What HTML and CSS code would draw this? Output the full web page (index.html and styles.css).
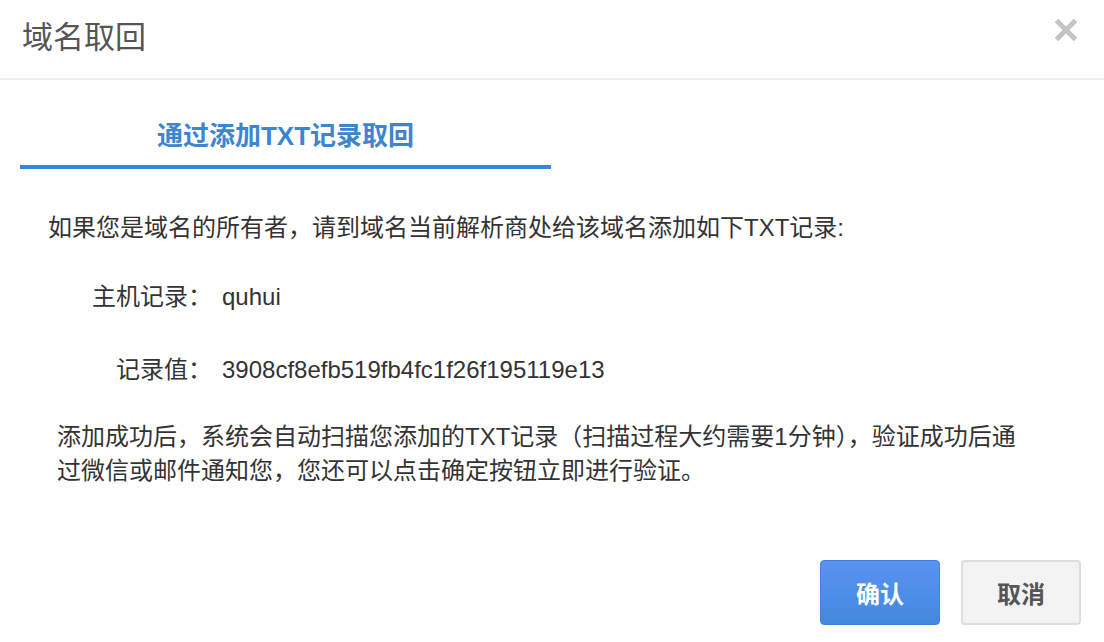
FILE: index.html
```html
<!DOCTYPE html>
<html lang="zh-CN">
<head>
<meta charset="utf-8">
<title>域名取回</title>
<link rel="stylesheet" href="styles.css">
</head>
<body>
<div class="dialog">
  <div class="header">
    <div class="title">域名取回</div>
    <button class="close" aria-label="关闭">
      <svg width="24" height="24" viewBox="0 0 24 24"><path d="M2.5 2.5 L21.5 21.5 M21.5 2.5 L2.5 21.5" stroke="#c4c4c4" stroke-width="5" stroke-linecap="butt" fill="none"/></svg>
    </button>
  </div>
  <div class="tabs">
    <div class="tab active">通过添加TXT记录取回</div>
  </div>
  <div class="content">
    <p class="intro">如果您是域名的所有者，请到域名当前解析商处给该域名添加如下TXT记录:</p>
    <div class="records">
      <div class="rec-row"><span class="rec-label">主机记录：</span><span class="rec-value">quhui</span></div>
      <div class="rec-row"><span class="rec-label">记录值：</span><span class="rec-value">3908cf8efb519fb4fc1f26f195119e13</span></div>
    </div>
    <p class="note">添加成功后，系统会自动扫描您添加的TXT记录（扫描过程大约需要1分钟），验证成功后通过微信或邮件通知您，您还可以点击确定按钮立即进行验证。</p>
  </div>
  <div class="footer">
    <button class="btn btn-primary">确认</button>
    <button class="btn btn-default">取消</button>
  </div>
</div>
</body>
</html>
```
FILE: styles.css
```css
html, body {
  margin: 0;
  padding: 0;
  background: #fff;
}
body {
  font-family: "Liberation Sans", "Noto Sans CJK SC", sans-serif;
  color: #333;
}
.dialog {
  width: 1104px;
  height: 642px;
  display: flex;
  flex-direction: column;
}
.header {
  height: 78px;
  border-bottom: 2px solid #eeeeee;
  display: flex;
  align-items: flex-start;
  justify-content: space-between;
  padding: 0 26px 0 22px;
  box-sizing: content-box;
}
.title {
  font-family: "Noto Sans CJK SC", serif;
  font-size: 31px;
  line-height: 32px;
  margin-top: 19px;
  color: #555;
  font-weight: 400;
}
.close {
  border: 0;
  background: none;
  padding: 0;
  margin-top: 18px;
  width: 24px;
  height: 24px;
  display: block;
  cursor: pointer;
}
.close svg { display: block; }
.tabs {
  margin-top: 38px;
  padding-left: 20px;
  display: flex;
}
.tab {
  width: 531px;
  text-align: center;
  font-size: 26px;
  line-height: 36px;
  font-weight: 700;
  color: #3b86cf;
  padding-bottom: 11px;
  border-bottom: 4px solid #3b86cf;
}
.content {
  padding-left: 48px;
  font-size: 24px;
  line-height: 34px;
}
.intro {
  margin: 42px 0 0;
}
.records {
  margin-top: 35px;
  display: flex;
  flex-direction: column;
  gap: 39px;
}
.rec-row {
  display: flex;
  gap: 10px;
}
.rec-label {
  width: 164px;
  text-align: right;
}
.note {
  margin: 33px 0 0 9px;
  width: 972px;
}
.footer {
  margin-top: auto;
  margin-bottom: 17px;
  display: flex;
  justify-content: flex-end;
  gap: 21px;
  padding-right: 23px;
}
.btn {
  width: 120px;
  height: 65px;
  border-radius: 4px;
  font-family: "Liberation Sans", "Noto Sans CJK SC", sans-serif;
  font-size: 24px;
  font-weight: 700;
  cursor: pointer;
  padding: 0;
}
.btn-primary {
  background: linear-gradient(#5993f3, #4289dc);
  border: 1px solid #3f80e2;
  color: #fff;
}
.btn-default {
  background: #f3f3f3;
  border: 2px solid #dedede;
  color: #555;
}
```
